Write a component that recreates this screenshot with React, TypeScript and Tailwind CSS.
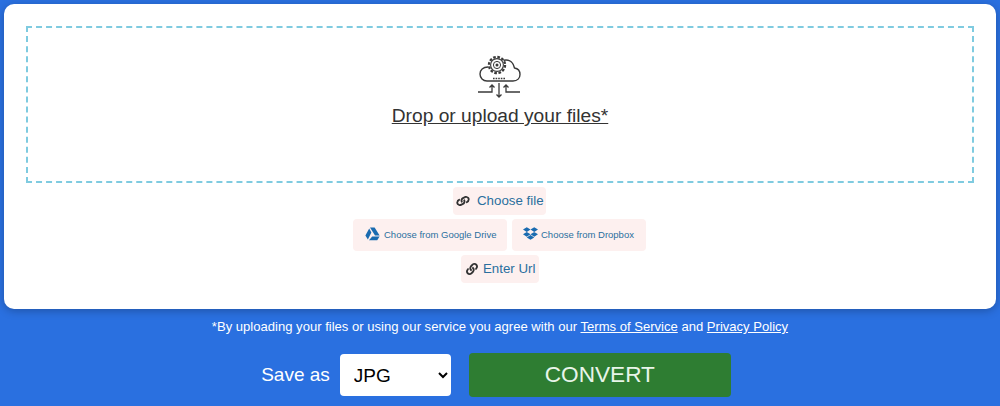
import React from 'react';
import { FaLink, FaDropbox } from 'react-icons/fa';

const CloudIcon = () => (
  <svg width="46" height="44" viewBox="0 0 46 44" fill="none" stroke="#3a3a3a" strokeWidth="1.2" className="block">
    {/* cloud */}
    <path d="M11 12 C6 12 3 15 3 19 C3 23 6 26 10 26 L36 26 C40.5 26 43 23 43 19.5 C43 15.5 40.5 13.5 37.5 13 C36.5 8 33 5 29 5 C27 5 26 5.5 25 6" strokeWidth="1.4" />
    {/* gear */}
    <circle cx="20" cy="10" r="8" fill="#fff" strokeWidth="2.4" strokeDasharray="2.6 1.6" />
    <circle cx="20" cy="10" r="6.4" fill="#fff" strokeWidth="1.1" />
    <circle cx="20" cy="10" r="3.6" strokeWidth="1" />
    <circle cx="20" cy="10" r="1.5" fill="#3a3a3a" stroke="none" />
    {/* dots */}
    <path d="M16 23.5 H28" strokeWidth="1.5" strokeDasharray="1.6 1" />
    {/* lines and arrows */}
    <path d="M1 37 H15 V30 M12.5 32.5 L15 30 L17.5 32.5" strokeWidth="1.3" />
    <path d="M43 37 H29 V30 M26.5 32.5 L29 30 L31.5 32.5" strokeWidth="1.3" />
    <path d="M22 28 V42 M19.5 39.5 L22 42 L24.5 39.5" strokeWidth="1.3" />
  </svg>
);

const DriveIcon = () => (
  <svg width="15" height="14" viewBox="0 0 15 14" fill="#1a6bb0" className="mb-[3px]">
    <path d="M5 0.5 H9.6 L14.6 8.6 H10 Z" />
    <path d="M4.2 1.6 L6.4 5.4 L2.9 12.6 L0.4 8.4 Z" />
    <path d="M7.2 9.6 H14.6 L12.2 13.2 H4 Z" />
  </svg>
);

const Tile = ({ className, children }: { className: string; children: React.ReactNode }) => (
  <a className={`flex items-center rounded bg-[#fdf0ef] text-[#2a6f9e] ${className}`}>{children}</a>
);

const App = () => {
  return (
    <div className="flex h-[406px] w-[1000px] flex-col overflow-hidden bg-[#2a70e0] font-['Liberation_Sans',Arial,sans-serif]">
      {/* Upload panel */}
      <div className="mx-1 mt-[4px] h-[305px] rounded-[10px] bg-white px-[22px] pt-[22px] shadow-[0_2px_8px_rgba(0,0,0,0.25)]">
        <div className="flex h-[157px] flex-col items-center border-2 border-dashed border-[#7fcbe0] pt-[27px]">
          <CloudIcon />
          <span className="mt-[5px] text-[19.2px] leading-[24px] text-[#333] underline">Drop or upload your files*</span>
        </div>

        <div className="mt-[4px] flex flex-col items-center">
          <Tile className="-ml-[1px] h-[28px] w-[93px] gap-[8px] pl-[4px] text-[13.3px]">
            <FaLink className="h-3 w-3 rotate-[20deg] text-[#333]" />
            <span>Choose file</span>
          </Tile>
          <div className="mt-[4px] -ml-[1px] flex gap-[5px]">
            <Tile className="h-[32px] w-[154px] gap-[4px] pl-[12px] text-[9.5px]">
              <DriveIcon />
              <span className="pt-[1px]">Choose from Google Drive</span>
            </Tile>
            <Tile className="h-[32px] w-[134px] gap-[3px] pl-[11px] text-[9.5px]">
              <FaDropbox className="mb-[3px] h-[15px] w-[15px] text-[#1a6bb0]" />
              <span className="pt-[1px]">Choose from Dropbox</span>
            </Tile>
          </div>
          <Tile className="mt-[4px] h-[28px] w-[78px] gap-[5px] pl-[5px] text-[13.3px]">
            <FaLink className="h-3 w-3 text-[#333]" />
            <span>Enter Url</span>
          </Tile>
        </div>
      </div>

      {/* Terms */}
      <p className="mt-[10px] text-center text-[13.07px] leading-[15px] text-white">
        *By uploading your files or using our service you agree with our <a className="underline">Terms of Service</a> and <a className="underline">Privacy Policy</a>
      </p>

      {/* Convert row */}
      <div className="mt-[19px] flex items-center justify-center gap-[18px] pr-[8px]">
        <div className="flex items-center gap-[10px]">
          <span className="text-[19px] text-white">Save as</span>
          <select defaultValue="JPG" className="h-[42px] w-[111px] rounded bg-white pl-[10px] text-[19px] text-black outline-none">
            <option>JPG</option>
            <option>PNG</option>
          </select>
        </div>
        <button className="h-[44px] w-[262px] rounded bg-[#2e7d32] text-[22.6px] text-[#e8f5e9]">CONVERT</button>
      </div>
    </div>
  );
};

export default App;
